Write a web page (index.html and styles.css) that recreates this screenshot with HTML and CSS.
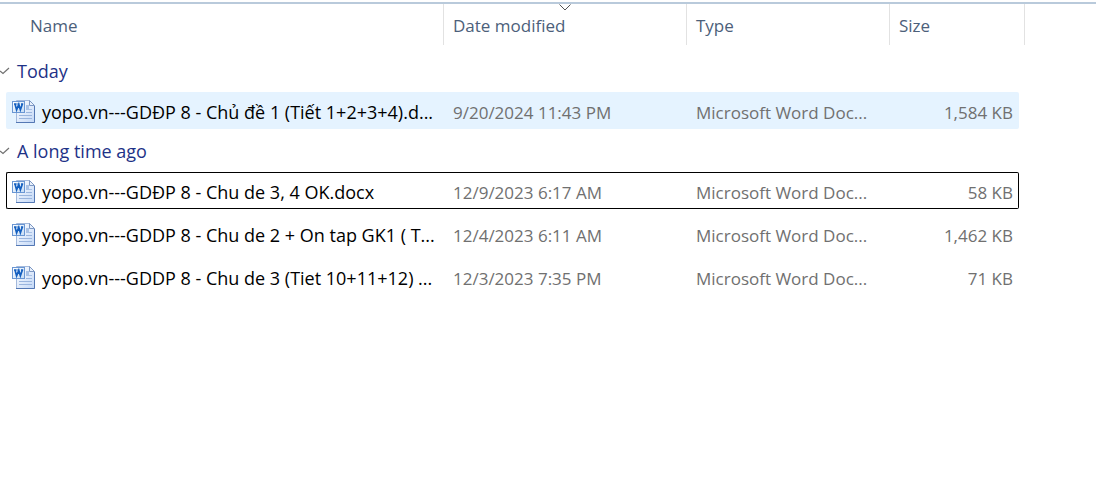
FILE: index.html
```html
<!DOCTYPE html>
<html lang="en">
<head>
<meta charset="utf-8">
<meta name="viewport" content="width=device-width, initial-scale=1">
<title>File list</title>
<link rel="stylesheet" href="styles.css">
</head>
<body>
<svg class="defs" width="0" height="0" aria-hidden="true">
  <defs>
    <linearGradient id="page" x1="0" y1="0" x2="1" y2="1">
      <stop offset="0" stop-color="#ffffff"/>
      <stop offset="1" stop-color="#c3d8f7"/>
    </linearGradient>
    <linearGradient id="tile" x1="0" y1="0" x2="1" y2="1">
      <stop offset="0" stop-color="#ffffff"/>
      <stop offset="1" stop-color="#c5dcf5"/>
    </linearGradient>
    <symbol id="word" viewBox="0 0 24 24">
      <path d="M4.5 0.5H17.5L22.5 5.5V22.5H4.5Z" fill="url(#page)" stroke="#a3b9dc"/>
      <path d="M4 22.5H22.5V6" fill="none" stroke="#5478b4"/>
      <path d="M17.5 0.5V5.5H22.5Z" fill="#e8f0fb" stroke="#7d98c4"/>
      <path d="M14 12.5H20M7 15.5H20M7 18.5H20" stroke="#9ab5de"/>
      <rect x="14" y="5" width="3" height="5" fill="#a9c2e6"/>
      <path d="M17 9.5H20" stroke="#a9c2e6"/>
      <rect x="0.5" y="1.5" width="12" height="11" fill="url(#tile)" stroke="#6b97d3"/>
      <path d="M3 4L4.6 9.8L6.8 4.4L8.4 9.8L10.4 4M2 4H4.6M5.4 4H7.6M9 4H11.2" fill="none" stroke="#1560c0" stroke-width="1.7"/>
    </symbol>
    <symbol id="check" viewBox="0 0 10 8">
      <path d="M0 4L3 6.5L9 1" fill="none" stroke="#707070" stroke-width="1.2"/>
    </symbol>
  </defs>
</svg>
<main class="explorer">
  <table class="files">
    <colgroup>
      <col class="col-gutter"><col><col class="col-date"><col class="col-type"><col class="col-size"><col class="col-gutter"><col class="col-rest">
    </colgroup>
    <thead>
      <tr>
        <th class="head head-name" colspan="2" scope="col"><button class="sort" type="button">Name</button></th>
        <th class="head" scope="col" aria-sort="descending"><button class="sort" type="button">Date modified</button>
          <svg class="sort-mark" viewBox="0 0 12 7" aria-hidden="true"><path d="M0.5 0.5L6 6L11.5 0.5" fill="none" stroke="#555"/></svg></th>
        <th class="head" scope="col"><button class="sort" type="button">Type</button></th>
        <th class="head" colspan="2" scope="col"><button class="sort" type="button">Size</button></th>
        <td></td>
      </tr>
    </thead>
    <tbody>
      <tr class="group group-first"><th colspan="7" scope="rowgroup"><button class="toggle" type="button" aria-expanded="true"><svg class="check" aria-hidden="true"><use href="#check"/></svg>Today</button></th></tr>
      <tr class="file hovered">
        <td></td>
        <td class="cell name"><div class="entry"><svg class="icon" aria-hidden="true"><use href="#word"/></svg><span>yopo.vn---GDĐP 8 - Chủ đề 1 (Tiết 1+2+3+4).d...</span></div></td>
        <td class="cell">9/20/2024 11:43 PM</td><td class="cell">Microsoft Word Doc...</td><td class="cell size">1,584 KB</td>
        <td></td><td></td>
      </tr>
    </tbody>
    <tbody>
      <tr class="group"><th colspan="7" scope="rowgroup"><button class="toggle" type="button" aria-expanded="true"><svg class="check" aria-hidden="true"><use href="#check"/></svg>A long time ago</button></th></tr>
      <tr class="file focused">
        <td></td>
        <td class="cell name"><div class="entry"><svg class="icon" aria-hidden="true"><use href="#word"/></svg><span>yopo.vn---GDĐP 8 - Chu de 3, 4 OK.docx</span></div></td>
        <td class="cell">12/9/2023 6:17 AM</td><td class="cell">Microsoft Word Doc...</td><td class="cell size">58 KB</td>
        <td></td><td></td>
      </tr>
      <tr class="gap"><td colspan="7"></td></tr>
      <tr class="file">
        <td></td>
        <td class="cell name"><div class="entry"><svg class="icon" aria-hidden="true"><use href="#word"/></svg><span>yopo.vn---GDDP 8 - Chu de 2 + On tap GK1 ( T...</span></div></td>
        <td class="cell">12/4/2023 6:11 AM</td><td class="cell">Microsoft Word Doc...</td><td class="cell size">1,462 KB</td>
        <td></td><td></td>
      </tr>
      <tr class="gap"><td colspan="7"></td></tr>
      <tr class="file">
        <td></td>
        <td class="cell name"><div class="entry"><svg class="icon" aria-hidden="true"><use href="#word"/></svg><span>yopo.vn---GDDP 8 - Chu de 3 (Tiet 10+11+12) ...</span></div></td>
        <td class="cell">12/3/2023 7:35 PM</td><td class="cell">Microsoft Word Doc...</td><td class="cell size">71 KB</td>
        <td></td><td></td>
      </tr>
    </tbody>
  </table>
</main>
</body>
</html>
```
FILE: styles.css
```css
* {
  box-sizing: border-box;
}

body {
  margin: 0;
  padding-top: 2px;
  background: #fff;
  color: #707070;
  font-family: "Open Sans", "Noto Sans", sans-serif;
  font-size: 17px;
  line-height: 24px;
}

.defs {
  position: absolute;
}

.explorer {
  border-top: 2px solid #b9cadb;
}

.files {
  width: 100%;
  min-width: 960px;
  table-layout: fixed;
  border-spacing: 0;
}

.col-gutter { width: 6px; }
.col-date { width: 243px; }
.col-type { width: 203px; }
.col-size { width: 129px; }
.col-rest { width: 71px; }

th,
td {
  padding: 0;
  font-weight: 400;
  text-align: left;
  white-space: nowrap;
}

button {
  padding: 0;
  border: 0;
  background: none;
  font: inherit;
}

.head {
  position: relative;
  height: 41px;
  padding: 2px 0 0 9px;
  border-right: 1px solid #e2e2e2;
}

.head-name {
  padding-left: 30px;
}

.sort {
  display: block;
  color: #4c607a;
}

.sort-mark {
  position: absolute;
  top: 0;
  left: 50%;
  width: 12px;
  height: 7px;
  margin-left: -6px;
}

.group {
  height: 43px;
  font-size: 18px;
}

.group-first {
  height: 47px;
}

.group-first th {
  padding-top: 4px;
}

.toggle {
  display: flex;
  align-items: center;
  gap: 7px;
  color: #1e3287;
}

.check {
  width: 10px;
  height: 8px;
}

.file {
  height: 37px;
}

.cell {
  padding: 4px 6px 0 9px;
}

.name {
  padding: 2px 0 0 6px;
  color: #000;
  font-size: 18px;
}

.size {
  text-align: right;
}

.entry {
  display: flex;
  align-items: center;
  gap: 6px;
}

.icon {
  flex: none;
  width: 24px;
  height: 24px;
}

.hovered .cell {
  background: #e5f3ff;
}

.focused .cell {
  border: solid #000;
  border-width: 1px 0;
}

.focused .name {
  padding-left: 5px;
  border-left-width: 1px;
}

.focused .size {
  padding-right: 5px;
  border-right-width: 1px;
}

.hovered .name,
.focused .name {
  border-radius: 2px 0 0 2px;
}

.hovered .size,
.focused .size {
  border-radius: 0 2px 2px 0;
}

.gap {
  height: 6px;
}
```
